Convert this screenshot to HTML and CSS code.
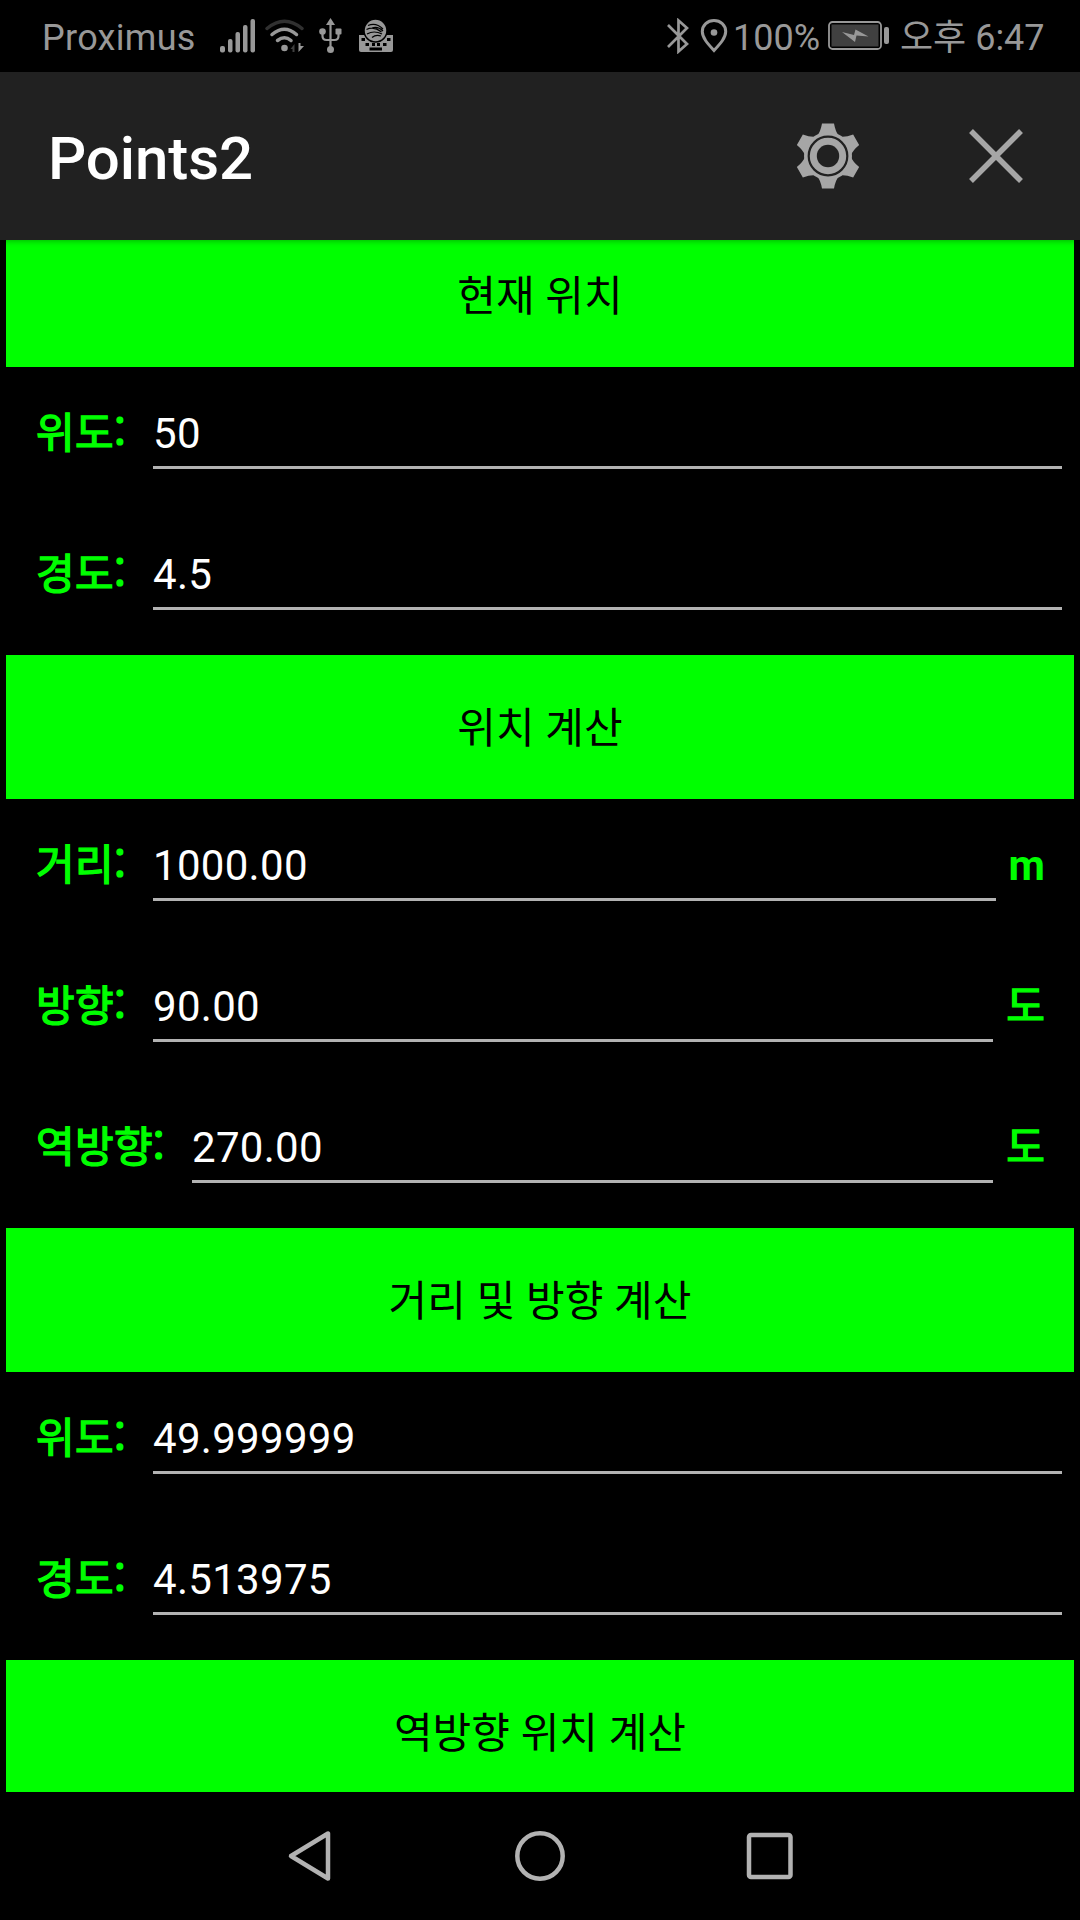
FILE: index.html
```html
<!DOCTYPE html>
<html lang="ko">
<head>
    <meta charset="UTF-8">
    <meta name="viewport" content="width=device-width, initial-scale=1.0">
    <title>Points2</title>
    <link rel="stylesheet" href="styles.css">
</head>
<body>
    <!-- status bar -->
    <div class="status-bar">
        <span class="carrier">Proximus</span>
        <svg class="signal" width="36" height="34" viewBox="0 0 36 34">
            <rect x="0" y="27" width="5" height="6.500" rx="2"/>
            <rect x="8" y="20" width="4.500" height="13.500" rx="2"/>
            <rect x="15.500" y="13" width="4.500" height="20.500" rx="2"/>
            <rect x="23" y="6" width="4.500" height="27.500" rx="2"/>
            <rect x="30.500" y="0" width="4.500" height="33.500" rx="2"/>
        </svg>
        <svg class="wifi" width="40" height="34" viewBox="0 0 40 34">
            <g fill="none" stroke-width="3.500" stroke-linecap="round">
                <path class="dim" d="M2 9.500Q19.500-5 37 9.500"/>
                <path d="M7 15.500Q19.500 5 31.500 15.500"/>
                <path d="M12.500 21.500Q19.500 16 26 21.500"/>
            </g>
            <circle cx="19.500" cy="29" r="3.300"/>
            <path class="dim-fill" d="M25.500 30l4-5v8h-2v-3z"/>
            <path d="M33.500 24v9l5.500-6h-3.500v-3z"/>
        </svg>
        <svg class="usb" width="24" height="36" viewBox="0 0 24 36">
            <path d="M11.500 0l4.500 7h-9z"/>
            <path d="M11.500 6v26M3.500 14v4q0 4 4 4h8q4 0 4-4v-4" fill="none" stroke-width="2.200"/>
            <circle cx="3.500" cy="13.500" r="3.300"/>
            <rect x="16.500" y="10.500" width="6" height="6" rx="1"/>
            <circle cx="11.500" cy="31.500" r="3.500"/>
        </svg>
        <svg class="keyboard" width="34" height="34" viewBox="0 0 34 34">
            <path d="M0 16h34v15q0 2-2 2h-30q-2 0-2-2z"/>
            <circle cx="16.500" cy="11.500" r="11.500" stroke="#000" stroke-width="1.500"/>
            <g fill="none" stroke="#000" stroke-width="1.200">
                <path d="M9 6.500Q17 3 24 10M13 9Q19 7 24 12M7.500 10.500Q15 7 22.500 13M8 15Q15 11 23 15M13 18.500Q17 15 22 17"/>
            </g>
            <path fill="#000" d="M2.500 19h3.500v3h-3.500zM28 19h3.500v3h-3.500zM6.500 24h3.500v3h-3.500zM13 24h3v3h-3zM18 24h3v3h-3zM24 24h3.500v3h-3.500zM10.500 28.500h12.500v3h-12.500z"/>
        </svg>
        <span class="spacer"></span>
        <svg class="bluetooth" width="22" height="36" viewBox="0 0 22 36">
            <path d="M1 7l19 19-8.500 7.500v-31l8.500 7.500-19 19" fill="none" stroke-width="2.700"/>
        </svg>
        <svg class="pin" width="28" height="34" viewBox="0 0 28 34">
            <path d="M14 31.500C8 25 2.300 19 2.300 12.500C2.300 6 7.500 1.500 14 1.500S25.700 6 25.700 12.500C25.700 19 20 25 14 31.500z" fill="none" stroke-width="3"/>
            <circle cx="14" cy="13.500" r="3.300"/>
        </svg>
        <span class="percent">100%</span>
        <svg class="battery" width="62" height="30" viewBox="0 0 62 30">
            <rect x="1" y="1" width="52" height="27" rx="3.500" fill="none" stroke-width="1.800"/>
            <rect x="3.500" y="3.500" width="47" height="22" fill="#404040"/>
            <path d="M14 11l12 3 1.500-5.500 13 7-12-1-1.500 6.500z"/>
            <rect x="56" y="6" width="5" height="17" rx="2"/>
        </svg>
        <span class="clock">오후 6:47</span>
    </div>

    <!-- app bar -->
    <header class="app-bar">
        <h1>Points2</h1>
        <svg class="gear" width="66" height="66" viewBox="-33 -33 66 66">
            <path id="tooth" d="M-11-20Q-7.500-24-6-32.500H6Q7.500-24 11-20z"/>
            <use href="#tooth" transform="rotate(60)"/>
            <use href="#tooth" transform="rotate(120)"/>
            <use href="#tooth" transform="rotate(180)"/>
            <use href="#tooth" transform="rotate(240)"/>
            <use href="#tooth" transform="rotate(300)"/>
            <circle r="24"/>
            <circle r="19.300" fill="none" stroke="#212121" stroke-width="2.200"/>
            <circle r="11.200" fill="#212121"/>
        </svg>
        <svg class="close" width="54" height="54" viewBox="0 0 54 54">
            <path d="M2 2l50 50M52 2L2 52" stroke-width="5.500"/>
        </svg>
    </header>

    <!-- form, scrolled down a little -->
    <main class="scroll">
        <button class="bar first">현재 위치</button>
        <section class="rows">
            <div class="row"><label>위도:</label><input type="text" value="50"></div>
            <div class="row"><label>경도:</label><input type="text" value="4.5"></div>
        </section>

        <button class="bar">위치 계산</button>
        <section class="rows">
            <div class="row has-unit"><label>거리:</label><input type="text" value="1000.00"><span class="unit">m</span></div>
            <div class="row has-unit"><label>방향:</label><input type="text" value="90.00"><span class="unit ko">도</span></div>
            <div class="row has-unit"><label class="long">역방향:</label><input type="text" value="270.00"><span class="unit ko">도</span></div>
        </section>

        <button class="bar">거리 및 방향 계산</button>
        <section class="rows">
            <div class="row"><label>위도:</label><input type="text" value="49.999999"></div>
            <div class="row"><label>경도:</label><input type="text" value="4.513975"></div>
        </section>

        <button class="bar">역방향 위치 계산</button>
    </main>

    <!-- navigation bar -->
    <nav class="nav-bar">
        <svg width="50" height="54" viewBox="0 0 50 54"><path d="M43 4.500v45L6 27z"/></svg>
        <svg width="54" height="54" viewBox="0 0 54 54"><circle cx="27" cy="27" r="22.700"/></svg>
        <svg width="50" height="54" viewBox="0 0 50 54"><rect x="4" y="6" width="41.500" height="42" rx="2"/></svg>
    </nav>
</body>
</html>
```

FILE: styles.css
```css
* {
    box-sizing: border-box;
}
body {
    margin: 0;
    width: 1080px;
    height: 1920px;
    display: flex;
    flex-direction: column;
    overflow: hidden;
    background: #000;
    color: #fff;
    font-family: Roboto, "Noto Sans CJK KR", sans-serif;
    font-size: 42px;
}
svg {
    display: block;
    flex: none;
}

/* status bar */
.status-bar {
    flex: none;
    height: 72px;
    display: flex;
    align-items: center;
    padding: 0 36px 0 42px;
    color: #989898;
    font-size: 36px;
    line-height: 72px;
    white-space: nowrap;
}
.status-bar span {
    padding-top: 3px;
}
.status-bar svg {
    fill: #989898;
    stroke: none;
}
.status-bar [stroke-width] {
    stroke: #989898;
}
.status-bar .keyboard [stroke-width] {
    stroke: #000;
}
.status-bar .wifi .dim {
    stroke: #303030;
}
.dim-fill {
    fill: #404040;
}
.carrier {
    width: 178px;
    letter-spacing: 0.3px;
}
.wifi {
    margin-left: 9px;
}
.usb {
    margin-left: 14px;
}
.keyboard {
    margin-left: 16px;
}
.spacer {
    flex: 1;
}
.pin {
    margin-left: 11px;
}
.percent {
    width: 95px;
    margin-left: 5px;
}
.clock {
    width: 144px;
    margin-left: 10px;
}

/* app bar */
.app-bar {
    flex: none;
    position: relative;
    z-index: 1;
    height: 168px;
    display: flex;
    align-items: center;
    padding: 0 57px 0 48px;
    background: #212121;
    box-shadow: 0 1px 6px rgba(0, 0, 0, 0.3);
}
.app-bar h1 {
    flex: 1;
    margin: 0;
    padding-top: 5px;
    font-size: 60px;
    font-weight: 500;
    letter-spacing: -0.1px;
}
.gear {
    fill: #a6a6a6;
}
.close {
    margin-left: 108px;
    stroke: #a6a6a6;
}

/* form */
.scroll {
    flex: none;
    height: 1552px;
    padding: 0 6px;
    overflow: hidden;
}
.bar {
    display: block;
    width: 100%;
    height: 144px;
    padding: 0 0 6px;
    border: none;
    background: #0f0;
    color: #000;
    font-family: "Noto Sans CJK KR", sans-serif;
    font-size: 42px;
    word-spacing: -1px;
}
.bar.first {
    margin-top: -17px;
}
.rows {
    padding: 3px 0;
}
.row {
    display: flex;
    align-items: baseline;
    height: 141px;
    padding: 36px 12px 0 30px;
}
.row.has-unit {
    padding-right: 29px;
}
.row label {
    flex: none;
    width: 117px;
    color: #0f0;
    font-family: "Noto Sans CJK KR", sans-serif;
    line-height: 48px;
    letter-spacing: 0.3px;
    -webkit-text-stroke: 1.4px #0f0;
}
.row label.long {
    width: 156px;
}
.row input {
    flex: 1;
    min-width: 0;
    height: 59px;
    padding: 0 0 8px;
    border: none;
    border-bottom: 3px solid #b2b2b2;
    background: none;
    color: #fff;
    font-family: Roboto, sans-serif;
    font-size: 42px;
    letter-spacing: 0.3px;
    line-height: 48px;
    outline: none;
}
.unit {
    margin-left: 13px;
    color: #0f0;
    font-weight: bold;
    line-height: 48px;
}
.unit.ko {
    font-weight: normal;
    -webkit-text-stroke: 1.4px #0f0;
}

/* navigation bar */
.nav-bar {
    flex: 1;
    display: flex;
    justify-content: space-between;
    align-items: center;
    padding: 0 285px;
}
.nav-bar svg {
    fill: none;
    stroke: #b2b2b2;
    stroke-width: 4.5px;
    stroke-linejoin: round;
}
```
